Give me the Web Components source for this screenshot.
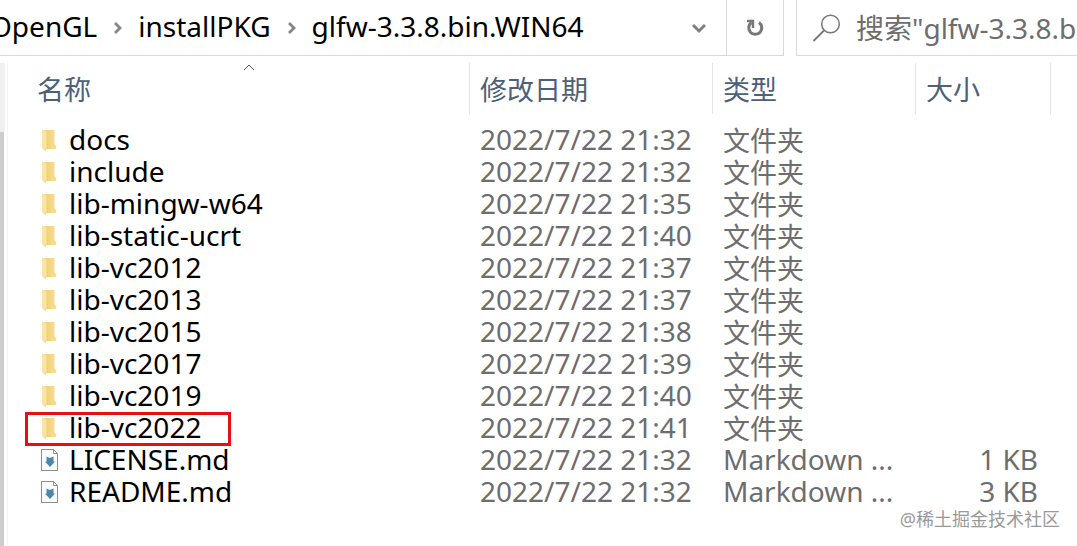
<!DOCTYPE html>
<html lang="zh-CN">
<head>
<meta charset="utf-8">
<title>glfw-3.3.8.bin.WIN64</title>
<style>
html, body { height: 100%; }
body { margin: 0; overflow: hidden; background: #fff; }
</style>
</head>
<body>
<explorer-window></explorer-window>
<script>
const define = (name, html, setup) => customElements.define(name, class extends HTMLElement {
  constructor() {
    super();
    this.attachShadow({ mode: 'open' }).innerHTML = '<style>*{box-sizing:border-box}</style>' + html;
  }
  connectedCallback() { if (setup) setup(this, this.shadowRoot); }
});

define('folder-icon', `
<style>:host{display:block;width:20px;height:24px}svg{display:block}</style>
<svg width="20" height="24" viewBox="0 0 20 24" aria-hidden="true">
  <defs><linearGradient id="g" x2="1"><stop offset="0" stop-color="#efcb74"/><stop offset="1" stop-color="#f8dd8e"/></linearGradient></defs>
  <path d="M1 2h12.500v14l1.500 2v3H4z" fill="url(#g)"/>
  <path d="M1 2h2l3 3v14l-2 4-3-3z" fill="#fae3a3"/>
  <path d="M6 5v14l-2 4" fill="none" stroke="#eccb76" stroke-width=".6"/>
</svg>`);

define('markdown-icon', `
<style>:host{display:block;width:20px;height:24px}svg{display:block}</style>
<svg width="20" height="24" viewBox="0 0 20 24" aria-hidden="true">
  <path d="M.5 1.500h12l4 4v17H.5z" fill="#fafcfd" stroke="#8d8d8d"/>
  <path d="M12.500 1.500v4h4" fill="none" stroke="#8d8d8d"/>
  <path d="M5.500 8.500l3.500 1.500 3.500-1.500v5H14l-5 5.500-5-5.500h1.500z" fill="#4c87ab"/>
</svg>`);

define('crumb-item', `
<style>
:host{display:flex;align-items:center;white-space:nowrap}
a{color:#000;text-decoration:none}
svg{margin:4px 16px 0;flex:none}
:host([last]) svg{display:none}
</style>
<a href="#"><slot></slot></a>
<svg width="9" height="12" viewBox="0 0 9 12" aria-hidden="true"><path d="M2 1l5 5-5 5" fill="none" stroke="#858585" stroke-width="2.800"/></svg>`);

define('address-bar', `
<style>
:host{display:flex;flex:1;min-width:0;border-right:1px solid #d9d9d9;border-bottom:1px solid #d9d9d9}
nav{display:flex;flex:1;min-width:0;align-items:center;margin-left:-10px;padding-bottom:3px}
button{display:flex;align-items:center;justify-content:center;width:56px;border:0;background:none;padding:0}
.refresh{border-left:1px solid #d9d9d9;width:57px}
</style>
<nav aria-label="路径"><slot></slot></nav>
<button aria-label="历史记录"><svg width="16" height="12" viewBox="0 0 16 12"><path d="M3 3l6 6 6-6" fill="none" stroke="#808080" stroke-width="3"/></svg></button>
<button class="refresh" aria-label="刷新"><svg width="20" height="20" viewBox="0 0 20 20"><path d="M14 4.500A6.500 6.500 0 1 1 6.500 4.500" fill="none" stroke="#777" stroke-width="3"/><path d="M2 3H8v7" fill="none" stroke="#777" stroke-width="2.400"/></svg></button>`);

define('search-box', `
<style>
:host{display:flex;align-items:center;width:281px;border-left:1px solid #d9d9d9;border-bottom:1px solid #d9d9d9;padding-left:15px;gap:14px}
svg{flex:none}
input{flex:1;min-width:0;height:44px;border:0;outline:0;padding:0;background:none;font:inherit;line-height:44px;color:#6d6d6d}
input::placeholder{color:#6d6d6d;opacity:1}
</style>
<svg width="30" height="30" viewBox="0 0 30 30" aria-hidden="true"><circle cx="18.500" cy="11" r="8.800" fill="none" stroke="#777" stroke-width="1.500"/><path d="M12 17.500L1.500 28" stroke="#777" stroke-width="1.800"/></svg>
<input type="text" aria-label="搜索" placeholder='搜索"glfw-3.3.8.b'>`);

define('side-scroll', `
<style>
:host{display:flex;flex-direction:column;width:8px;flex:none;border-right:1px solid #f3f3f3;margin-top:7px}
.track{height:69px;width:5px;background:#f0f0f0}
.thumb{flex:1;width:4px;background:#cdcdcd}
</style>
<div class="track"></div><div class="thumb"></div>`);

define('file-list', `
<style>
:host{display:block;flex:1;min-width:0;padding-top:7px}
table{width:100%;table-layout:fixed;border-collapse:separate;border-spacing:0}
.date{width:243px}.type{width:203px}.size{width:135px}.rest{width:26px}
th{position:relative;height:51px;padding:2px 0 0 10px;text-align:left;font-weight:400;font-size:27px;line-height:32px;color:#4c607a;border-right:1px solid #e5e5e5}
th:first-child{padding-left:29px}
th:last-child{border:0}
th svg{position:absolute;top:1px;left:50%;margin-left:4px}
thead::after{content:"";display:block;height:11px}
td{height:32px;padding:0 0 0 10px;line-height:28px;vertical-align:top;white-space:nowrap;color:#6d6d6d}
td:first-child{padding-left:18px;color:#000}
td:nth-child(4){text-align:right;padding-right:13px}
td.zh{font-size:27px;line-height:32px}
.name{display:flex;align-items:center;width:fit-content;gap:8px;height:32px;padding:0 29px 4px 15px}
.name>:first-child{margin-top:2px}
.marked{outline:3px solid #e60f12;outline-offset:-2px}
</style>
<table>
<colgroup><col><col class="date"><col class="type"><col class="size"><col class="rest"></colgroup>
<thead><tr><th>名称<svg width="12" height="7" viewBox="0 0 12 7" aria-hidden="true"><path d="M1 6l5-5 5 5" fill="none" stroke="#555"/></svg></th><th>修改日期</th><th>类型</th><th>大小</th><th></th></tr></thead>
<tbody></tbody>
</table>`, (host, root) => {
  const files = [
    ['docs', '21:32'], ['include', '21:32'], ['lib-mingw-w64', '21:35'], ['lib-static-ucrt', '21:40'],
    ['lib-vc2012', '21:37'], ['lib-vc2013', '21:37'], ['lib-vc2015', '21:38'], ['lib-vc2017', '21:39'],
    ['lib-vc2019', '21:40'], ['lib-vc2022', '21:41'], ['LICENSE.md', '21:32', '1 KB'], ['README.md', '21:32', '3 KB']
  ];
  root.querySelector('tbody').innerHTML = files.map(([name, time, size]) => `<tr>
    <td><span class="name${name === 'lib-vc2022' ? ' marked' : ''}">${size ? '<markdown-icon></markdown-icon>' : '<folder-icon></folder-icon>'}<span>${name}</span></span></td>
    <td>2022/7/22 ${time}</td>
    <td class="${size ? '' : 'zh'}">${size ? 'Markdown ...' : '文件夹'}</td>
    <td>${size || ''}</td><td></td></tr>`).join('');
});

define('explorer-window', `
<style>
:host{display:flex;flex-direction:column;position:relative;height:100%;background:#fff;font:28px/32px "Noto Sans","Noto Sans CJK SC",sans-serif}
header{display:flex;gap:12px;height:56px;flex:none}
main{display:flex;flex:1;min-height:0}
footer{position:absolute;right:17px;bottom:15px;font-size:18px;line-height:24px;color:#999}
</style>
<header>
  <address-bar><crumb-item>OpenGL</crumb-item><crumb-item>installPKG</crumb-item><crumb-item last>glfw-3.3.8.bin.WIN64</crumb-item></address-bar>
  <search-box></search-box>
</header>
<main><side-scroll></side-scroll><file-list></file-list></main>
<footer>@稀土掘金技术社区</footer>`);
</script>
</body>
</html>
